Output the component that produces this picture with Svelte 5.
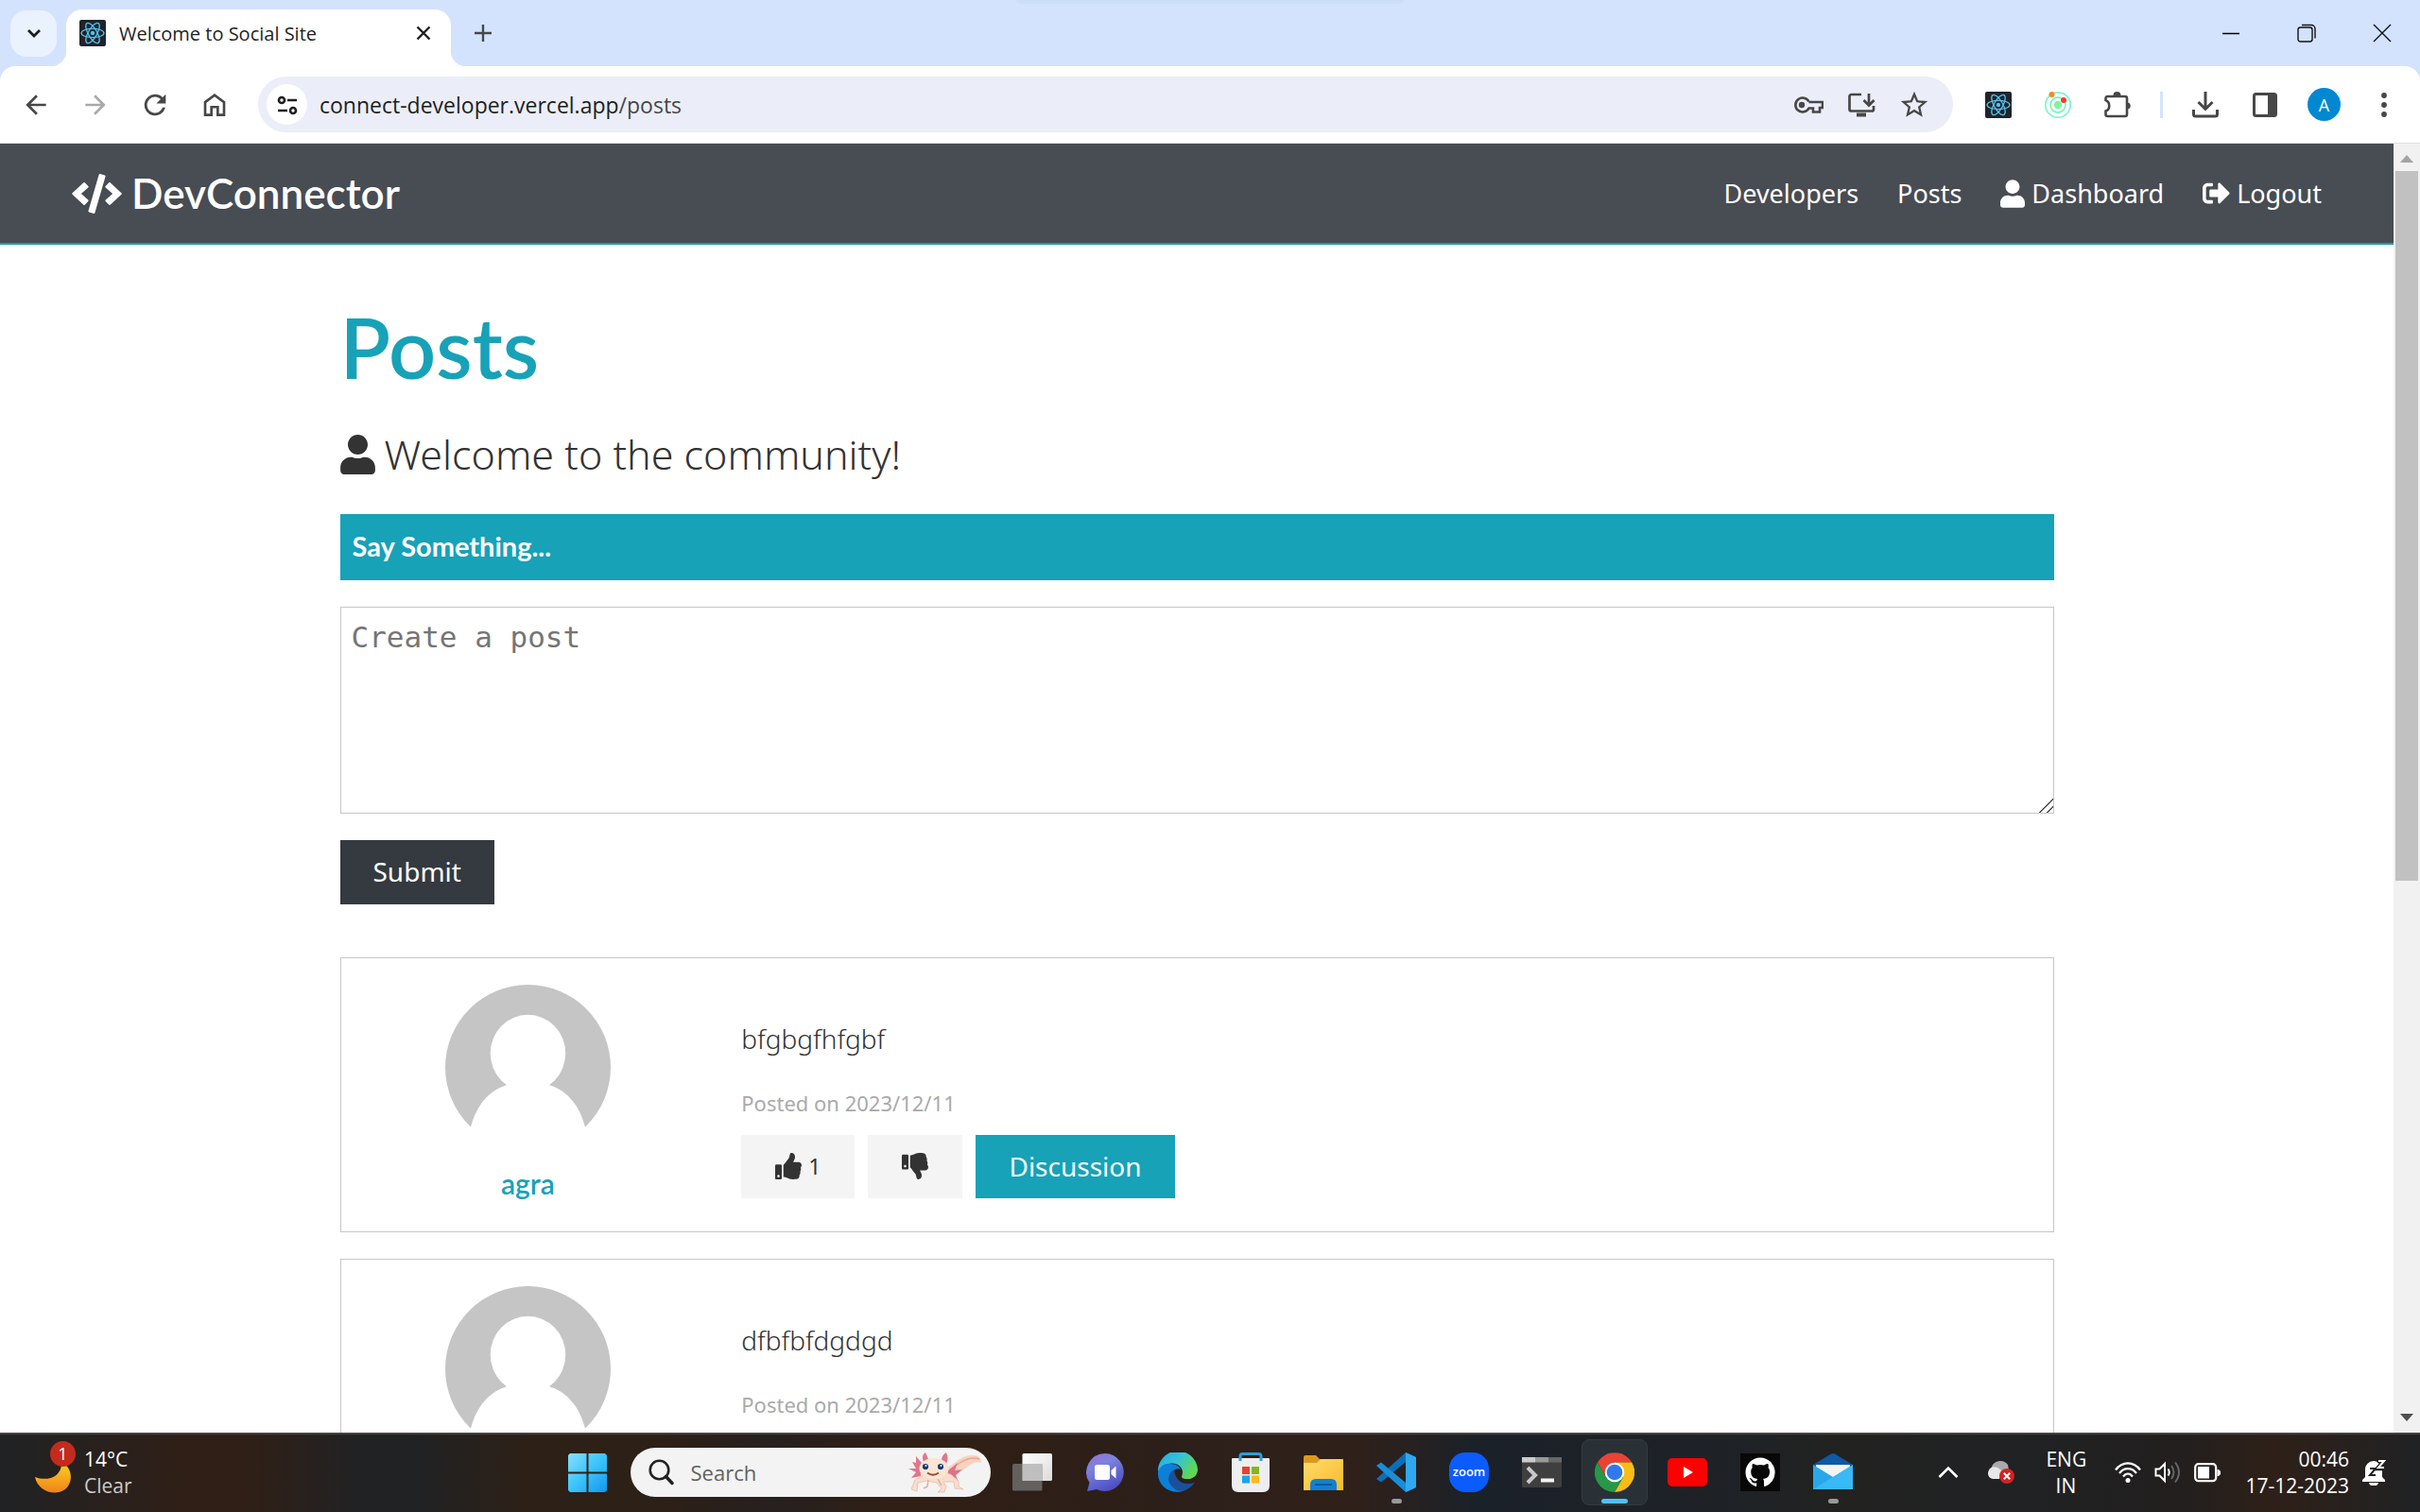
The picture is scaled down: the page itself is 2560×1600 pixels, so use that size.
<script>
  let draft = $state('');
  const posts = [
    { name: 'agra', text: 'bfgbgfhfgbf', date: '2023/12/11', likes: 1 },
    { name: 'agra', text: 'dfbfbfdgdgd', date: '2023/12/11', likes: 0 }
  ];
</script>

{#snippet atom()}
  <svg class="favicon" viewBox="0 0 28 28" aria-hidden="true">
    <rect width="28" height="28" rx="2" fill="#20232a" />
    <g fill="none" stroke="#53c1ea" stroke-width="1.3">
      <ellipse cx="14" cy="14" rx="12" ry="4.6" />
      <ellipse cx="14" cy="14" rx="12" ry="4.6" transform="rotate(60 14 14)" />
      <ellipse cx="14" cy="14" rx="12" ry="4.6" transform="rotate(120 14 14)" />
    </g>
    <circle cx="14" cy="14" r="2.2" fill="#53c1ea" />
  </svg>
{/snippet}

{#snippet user()}
  <svg class="fa user" viewBox="0 0 448 512" aria-hidden="true"><path d="M224 256c70.700 0 128-57.300 128-128S294.700 0 224 0 96 57.300 96 128s57.300 128 128 128zm89.600 32h-16.700c-22.200 10.200-46.900 16-72.900 16s-50.600-5.800-72.900-16h-16.700C60.200 288 0 348.200 0 422.400V464c0 26.500 21.500 48 48 48h352c26.500 0 48-21.500 48-48v-41.600c0-74.200-60.200-134.400-134.400-134.400z" /></svg>
{/snippet}

<div class="screen">
  <header class="browser">
    <div class="tabs">
      <div class="pull"></div>
      <button class="tab-search" aria-label="Search tabs">
        <svg width="16" height="16" viewBox="0 0 16 16" fill="none" stroke="#1f1f1f" stroke-width="2.800"><path d="M2 5l6 6 6-6" /></svg>
      </button>
      <div class="tab">
        {@render atom()}
        <span class="title">Welcome to Social Site</span>
        <button class="close" aria-label="Close tab">
          <svg width="24" height="24" viewBox="0 0 24 24" fill="none" stroke="#1f1f1f" stroke-width="2.400"><path d="M5.500 5.500l13 13M18.500 5.500l-13 13" /></svg>
        </button>
      </div>
      <button class="new-tab" aria-label="New tab">
        <svg width="24" height="24" viewBox="0 0 24 24" fill="none" stroke="#474747" stroke-width="2.400"><path d="M12 3v18M3 12h18" /></svg>
      </button>
      <div class="window-controls">
        <button aria-label="Minimize"><svg width="20" height="20" viewBox="0 0 20 20"><path d="M1 10.500h18" stroke="#000" stroke-width="1.500" /></svg></button>
        <button aria-label="Restore"><svg width="20" height="20" viewBox="0 0 20 20" fill="none" stroke="#111" stroke-width="1.400"><rect x="1" y="4" width="15" height="15" rx="2.500" /><path d="M5 1.500h10a4 4 0 0 1 4 4v10" /></svg></button>
        <button aria-label="Close window"><svg width="20" height="20" viewBox="0 0 20 20" stroke="#111" stroke-width="1.400"><path d="M1 1l18 18M19 1L1 19" /></svg></button>
      </div>
    </div>

    <div class="toolbar">
      <button aria-label="Back"><svg width="32" height="32" viewBox="0 0 24 24" fill="#474747"><path d="M20 11H7.830l5.590-5.590L12 4l-8 8 8 8 1.410-1.410L7.830 13H20v-2z" /></svg></button>
      <button aria-label="Forward"><svg width="32" height="32" viewBox="0 0 24 24" fill="#a9a9a9"><path d="M12 4l-1.410 1.410L16.170 11H4v2h12.170l-5.580 5.590L12 20l8-8z" /></svg></button>
      <button aria-label="Reload"><svg width="34" height="34" viewBox="0 0 24 24" fill="#474747"><path d="M17.650 6.350A7.960 7.960 0 0 0 12 4a8 8 0 1 0 7.730 10h-2.080A6 6 0 1 1 12 6c1.660 0 3.140.69 4.220 1.780L13 11h7V4l-2.350 2.350z" /></svg></button>
      <button aria-label="Home"><svg width="32" height="32" viewBox="0 0 24 24" fill="none" stroke="#474747" stroke-width="2"><path d="M4.500 9.800L12 4.200l7.500 5.600V20H14.500v-6.300h-5V20h-5z" /></svg></button>
      <div class="omnibox">
        <button class="site" aria-label="View site information">
          <svg width="26" height="26" viewBox="0 0 26 26" fill="none" stroke="#1f1f1f" stroke-width="2.600"><circle cx="7" cy="8" r="3" /><path d="M13 8h10M3 19h10" /><circle cx="19" cy="19" r="3" /></svg>
        </button>
        <a class="url" href="/posts">connect-developer.vercel.app<span>/posts</span></a>
        <div class="omni-actions">
          <button aria-label="Manage passwords"><svg width="32" height="20" viewBox="0 0 32 20" fill="none" stroke="#474747" stroke-width="2.600"><path d="M16.500 6.500A7.500 7.500 0 1 0 16.500 13.500H21V17.500H28V13H31V7H16.500" /><circle cx="9" cy="10" r="3.200" fill="#474747" stroke="none" /></svg></button>
          <button aria-label="Install app"><svg width="30" height="28" viewBox="0 0 30 28" fill="none" stroke="#474747" stroke-width="2.700"><path d="M15 3H4.500A2 2 0 0 0 2.500 5V18.500A2 2 0 0 0 4.500 20.500H26A2 2 0 0 0 28 18.500V15M23 2V13M17.500 9l5.500 5.500L28.500 9" /><path d="M10 24.500h10" stroke-width="4" /></svg></button>
          <button aria-label="Bookmark"><svg width="34" height="34" viewBox="0 0 24 24" fill="#474747"><path d="M22 9.240l-7.190-.62L12 2 9.190 8.630 2 9.240l5.460 4.730L5.820 21 12 17.270 18.180 21l-1.630-7.030L22 9.240zM12 15.400l-3.760 2.270 1-4.280-3.320-2.880 4.380-.38L12 6.100l1.710 4.040 4.380.38-3.320 2.880 1 4.280L12 15.400z" /></svg></button>
        </div>
      </div>
      <button aria-label="React Developer Tools">{@render atom()}</button>
      <button aria-label="Orbit">
        <svg width="30" height="30" viewBox="0 0 30 30" fill="none" stroke-width="1.800"><circle cx="15" cy="15" r="13.200" stroke="#83f5cf" /><circle cx="15" cy="15" r="8" stroke="#80f5b9" /><circle cx="15" cy="15" r="4.200" fill="#7df5a0" /><circle cx="8.500" cy="4" r="3" fill="#f58a1f" /><circle cx="21" cy="10" r="3" fill="#f23b2f" /></svg>
      </button>
      <button aria-label="Extensions">
        <svg width="32" height="32" viewBox="0 0 32 32" fill="none"><path d="M3.500 11V9a2 2 0 0 1 2-2H24a2 2 0 0 1 2 2V26a2 2 0 0 1-2 2H5.500a2 2 0 0 1-2-2V22.500C8.500 21 8.500 13 3.500 11z" stroke="#474747" stroke-width="2.600" /><path d="M11.500 6a4 4 0 0 1 8 0zM27 13.500a3.600 3.600 0 0 1 0 7z" fill="#474747" /></svg>
      </button>
      <span class="divider"></span>
      <button aria-label="Downloads"><svg width="30" height="30" viewBox="0 0 30 30" fill="none" stroke="#474747" stroke-width="3"><path d="M15 1V19M7.500 12L15 19.500 22.500 12M2.500 20v5a2 2 0 0 0 2 2h21a2 2 0 0 0 2-2v-5" /></svg></button>
      <button aria-label="Side panel"><svg width="28" height="28" viewBox="0 0 28 28"><rect x="2.500" y="2.500" width="23" height="23" rx="2" fill="none" stroke="#474747" stroke-width="3" /><path d="M17 2h8v24h-8z" fill="#474747" /></svg></button>
      <button class="avatar-btn" aria-label="Profile">A</button>
      <button aria-label="Menu"><svg width="8" height="28" viewBox="0 0 8 28" fill="#474747"><circle cx="4" cy="4" r="2.900" /><circle cx="4" cy="14" r="2.900" /><circle cx="4" cy="24" r="2.900" /></svg></button>
    </div>
  </header>

  <div class="viewport">
    <div class="page">
      <nav class="navbar">
        <a class="brand" href="/">
          <svg class="fa" width="53" height="42" viewBox="0 0 640 512" aria-hidden="true"><path d="M278.900 511.500l-61-17.700c-6.400-1.800-10-8.500-8.200-14.900L346.200 8.700c1.800-6.400 8.500-10 14.900-8.200l61 17.700c6.400 1.800 10 8.500 8.200 14.900L293.800 503.300c-1.900 6.400-8.500 10.100-14.900 8.200zm-114-112.200l43.500-46.400c4.600-4.900 4.300-12.700-.8-17.200L117 256l90.600-79.700c5.100-4.500 5.500-12.300.8-17.200l-43.500-46.400c-4.500-4.800-12.100-5.100-17-.5L3.800 247.200c-5.100 4.700-5.100 12.800 0 17.500l144.100 135.100c4.900 4.600 12.500 4.400 17-.5zm327.200.6l144.100-135.100c5.100-4.700 5.100-12.800 0-17.500L492.100 112.100c-4.800-4.500-12.400-4.300-17 .5L431.600 159c-4.600 4.900-4.300 12.700.8 17.200L523 256l-90.600 79.700c-5.100 4.500-5.500 12.300-.8 17.200l43.500 46.400c4.500 4.900 12.100 5.100 17 .6z" /></svg>
          DevConnector
        </a>
        <ul>
          <li><a href="/profiles">Developers</a></li>
          <li><a href="/posts">Posts</a></li>
          <li><a href="/dashboard">{@render user()}Dashboard</a></li>
          <li><a href="/logout"><svg class="fa" width="29" height="29" viewBox="0 0 512 512" aria-hidden="true"><path d="M497 273L329 441c-15 15-41 4.500-41-17v-96H152c-13.300 0-24-10.700-24-24v-96c0-13.300 10.700-24 24-24h136V88c0-21.400 25.900-32 41-17l168 168c9.300 9.400 9.300 24.600 0 34zM192 436v-40c0-6.600-5.400-12-12-12H96c-17.700 0-32-14.300-32-32V160c0-17.700 14.300-32 32-32h84c6.600 0 12-5.400 12-12V76c0-6.600-5.400-12-12-12H96c-53 0-96 43-96 96v192c0 53 43 96 96 96h84c6.600 0 12-5.400 12-12z" /></svg>Logout</a></li>
        </ul>
      </nav>

      <main>
        <h1>Posts</h1>
        <p class="lead">{@render user()}Welcome to the community!</p>
        <form onsubmit={(e) => e.preventDefault()}>
          <h3><label for="post-text">Say Something...</label></h3>
          <textarea id="post-text" placeholder="Create a post" bind:value={draft}></textarea>
          <button class="btn dark" type="submit">Submit</button>
        </form>
        <div class="posts">
          {#each posts as post}
            <article>
              <a class="author" href="/profile">
                <svg viewBox="0 0 176 176" role="img" aria-label="Avatar">
                  <defs><mask id="person"><rect width="176" height="176" fill="#fff" /><ellipse cx="88" cy="73" rx="40" ry="41" fill="#000" /><path d="M68 106Q88 98 108 106C132 112 144 132 149 152L152 180H24L27 152C32 132 44 112 68 106z" fill="#000" /></mask></defs>
                  <circle cx="88" cy="88" r="88" fill="#c5c5c5" mask="url(#person)" />
                </svg>
                <h4>{post.name}</h4>
              </a>
              <div class="body">
                <p class="text">{post.text}</p>
                <p class="date">Posted on {post.date}</p>
                <div class="actions">
                  <button class="btn light" aria-label="Like">
                    <svg class="fa" width="28" height="28" viewBox="0 0 512 512"><path d="M104 224H24c-13.255 0-24 10.745-24 24v240c0 13.255 10.745 24 24 24h80c13.255 0 24-10.745 24-24V248c0-13.255-10.745-24-24-24zM64 472c-13.255 0-24-10.745-24-24s10.745-24 24-24 24 10.745 24 24-10.745 24-24 24zM384 81.452c0 42.416-25.970 66.208-33.277 94.548h101.723c33.397 0 59.397 27.746 59.553 58.098.084 17.938-7.546 37.249-19.439 49.197l-.11.11c9.836 23.337 8.237 56.037-9.308 79.469 8.681 25.895-.069 57.704-16.382 74.757 4.298 17.598 2.244 32.575-6.148 44.632C440.202 511.587 389.616 512 346.839 512l-2.845-.001c-48.287-.017-87.806-17.598-119.560-31.725-15.957-7.099-36.821-15.887-52.651-16.178-6.540-.12-11.783-5.457-11.783-11.998v-213.770c0-3.200 1.282-6.271 3.558-8.521 39.614-39.144 56.648-80.587 89.117-113.111 14.804-14.832 20.188-37.236 25.393-58.902C282.515 39.293 291.817 0 312 0c24 0 72 8 72 81.452z" /></svg>
                    {#if post.likes}<span>{post.likes}</span>{/if}
                  </button>
                  <button class="btn light" aria-label="Unlike">
                    <svg class="fa" width="28" height="28" viewBox="0 0 512 512"><path d="M0 56v240c0 13.255 10.745 24 24 24h80c13.255 0 24-10.745 24-24V56c0-13.255-10.745-24-24-24H24C10.745 32 0 42.745 0 56zm40 200c0-13.255 10.745-24 24-24s24 10.745 24 24-10.745 24-24 24-24-10.745-24-24zM312 512c-20.183 0-29.485-39.293-33.931-57.795-5.206-21.666-10.589-44.070-25.393-58.902-32.469-32.524-49.503-73.967-89.117-113.111a11.980 11.980 0 0 1-3.558-8.521V59.901c0-6.541 5.243-11.878 11.783-11.998 15.831-.29 36.694-9.079 52.651-16.178C256.189 17.598 295.709.017 343.995 0h2.844c42.777 0 93.363.413 113.774 29.737 8.392 12.057 10.446 27.034 6.148 44.632 16.312 17.053 25.063 48.863 16.382 74.757 17.544 23.432 19.143 56.132 9.308 79.469l.11.11c11.893 11.949 19.523 31.259 19.439 49.197-.156 30.352-26.157 58.098-59.553 58.098H350.723C358.030 364.340 384 388.132 384 430.548 384 504 336 512 312 512z" /></svg>
                  </button>
                  <a class="btn primary" href="/post">Discussion</a>
                </div>
              </div>
            </article>
          {/each}
        </div>
      </main>
    </div>
    <div class="scrollbar" aria-hidden="true">
      <svg width="14" height="8" viewBox="0 0 14 8"><path d="M0 8L7 0l7 8z" fill="#a3a3a3" /></svg>
      <div class="track"><div class="thumb"></div></div>
      <svg width="14" height="8" viewBox="0 0 14 8"><path d="M0 0l7 8 7-8z" fill="#505050" /></svg>
    </div>
  </div>

  <footer class="taskbar">
    <button class="weather">
      <span class="moon">
        <svg width="40" height="36" viewBox="0 0 40 36"><defs><linearGradient id="moon" x1="0" y1="0" x2="0" y2="1"><stop offset="0" stop-color="#f8d51c" /><stop offset="1" stop-color="#f2811d" /></linearGradient></defs><path d="M29 2C42 9 41 24 33 31C22 39 4 33 1 18C14 23 30 18 29 2z" fill="url(#moon)" /></svg>
        <b>1</b>
      </span>
      <span class="temps"><span>14°C</span><span class="dim">Clear</span></span>
    </button>

    <div class="apps">
      <button class="start" aria-label="Start"><svg width="41" height="41" viewBox="0 0 41 41"><defs><linearGradient id="win" x1="0" y1="0" x2="1" y2="1"><stop offset="0" stop-color="#86dfff" /><stop offset=".5" stop-color="#3cc4fa" /><stop offset="1" stop-color="#0f97f0" /></linearGradient></defs><path d="M2 0H19.500V19.500H0V2zM21.500 0H39l2 2V19.500H21.500zM0 21.500H19.500V41H2l-2-2zM21.500 21.500H41V39l-2 2H21.500z" fill="url(#win)" /></svg></button>
      <label class="search">
        <svg width="28" height="28" viewBox="0 0 28 28" fill="none" stroke="#222" stroke-width="2.600" stroke-linecap="round"><circle cx="12.500" cy="11.500" r="9.800" /><path d="M19.500 18.500l6.500 7" stroke-width="3.400" /></svg>
        <input type="text" placeholder="Search" aria-label="Search" />
        <svg width="78" height="44" viewBox="0 0 78 44" aria-hidden="true">
          <path d="M40 18C50 12 55 4 68 4C75 4 78 8 77 12C72 10 68 12 63 16C56 21 49 25 41 26z" fill="#f6d3c0" /><path d="M50 15C58 9 66 5 75 8" fill="none" stroke="#f0a78c" stroke-width="1.500" />
          <path d="M42 20L52 12 49 20 57 19 50 25 53 32 44 28 41 33z" fill="#dd7388" />
          <path d="M14 12L8 5 8 12 4 11 8 18 0 18 8 22 3 28 13 26zM16 11C14 6 15 3 18 1L22 10zM35 11C35 5 37 3 40 1C42 5 42 9 40 13z" fill="#e0778c" />
          <path d="M16 25C24 22 44 20 48 27C52 29 54 33 53 37L58 40 49 39 48 32 37 32 40 37 38 43H31L35 39 30 33 19 31 10 33 9 42 3 40 7 30z" fill="#f8ddcd" stroke="#e9b79f" stroke-width=".7" />
          <path d="M21 30l-1 7-4 2M31 29l4 7" fill="none" stroke="#e5ad96" stroke-width="1.500" />
          <ellipse cx="27" cy="18" rx="15.500" ry="11" fill="#fae4d4" />
          <circle cx="18" cy="16" r="3.100" fill="#173b6b" /><circle cx="34" cy="16" r="3.100" fill="#173b6b" /><circle cx="18.500" cy="15" r="1" fill="#fff" /><circle cx="34.500" cy="15" r="1" fill="#fff" />
          <path d="M20 22.500Q26 27 32 22.500" fill="none" stroke="#9c4b2a" stroke-width="1.800" />
        </svg>
      </label>
      <div class="icons">
        <button aria-label="Task view"><svg viewBox="0 0 42 42"><defs><linearGradient id="tv" x1="0" y1="0" x2="1" y2="1"><stop stop-color="#fff" /><stop offset="1" stop-color="#dcdcdc" /></linearGradient></defs><rect x="10.500" y="1" width="31.500" height="29" rx="1.500" fill="url(#tv)" /><rect y="12" width="31.500" height="28.500" rx="1.500" fill="#6d6c6b" fill-opacity=".85" /><path d="M10.500 12h21v18h-21z" fill="#bfbfbf" /></svg></button>
        <button aria-label="Chat"><svg viewBox="0 0 42 42"><defs><linearGradient id="chat" x1="0" y1="0" x2=".5" y2="1"><stop stop-color="#9a6fd0" /><stop offset=".4" stop-color="#7b83e0" /><stop offset="1" stop-color="#4f50c4" /></linearGradient></defs><path d="M21 1a20 20 0 1 1-9 38L2 41l2.500-9A20 20 0 0 1 21 1z" fill="url(#chat)" /><rect x="10" y="13" width="16" height="16" rx="2.500" fill="#fff" /><path d="M27.500 19l5-4.500v13l-5-4.500z" fill="#fff" /></svg></button>
        <button aria-label="Edge"><svg viewBox="0 0 42 42"><defs><linearGradient id="edge1" x1="0" y1="0" x2="1" y2=".5"><stop stop-color="#2aa8e0" /><stop offset=".5" stop-color="#33c1dd" /><stop offset="1" stop-color="#5fd94f" /></linearGradient></defs><path d="M0 21A21 21 0 0 1 42 18C42 25 36 28.500 31 28C27 28 24 27 25.500 24C28 16 20 10 12 12C6 13 1 17 0 21z" fill="url(#edge1)" /><path d="M0 21C2 14 8 11 14 12C19 12 23 15 24 18C17 15 13 22 15 29C17 35 22 40 28 40.500C12 46 -1 34 0 21z" fill="#0c7fd9" /><path d="M17 18C11 22 9 29 14 35C18 41 25 42 30 39.500C34 37.500 37 34.500 39 31.500C29 36 18 31 17 18z" fill="#1a5199" /></svg></button>
        <button aria-label="Microsoft Store"><svg viewBox="0 0 42 42"><path d="M1 7Q1 6 2 6H40Q41 6 41 7V35Q41 42 34 42H8Q1 42 1 35z" fill="#eee" /><path d="M10 9V4Q10 1.500 12.500 1.500H29.500Q32 1.500 32 4V9" fill="none" stroke="#2a9fe0" stroke-width="3" /><path d="M12 15h8v8h-8z" fill="#e6432b" /><path d="M22 15h8v8h-8z" fill="#82b721" /><path d="M12 24.500h8v8h-8z" fill="#1ba4ea" /><path d="M22 24.500h8v8h-8z" fill="#fbb91b" /></svg></button>
        <button aria-label="File Explorer"><svg viewBox="0 0 42 42"><defs><linearGradient id="fold" x1="0" y1="0" x2="1" y2="1"><stop stop-color="#ffdc6e" /><stop offset="1" stop-color="#f9b928" /></linearGradient></defs><path d="M0 5Q0 3 2 3H13L17 7H42V16H0z" fill="#dc9a1d" /><path d="M0 11H14L18 7H41Q42 7 42 9V40H0z" fill="url(#fold)" /><path d="M7 40V34Q7 28 13 28H29Q35 28 35 34V40z" fill="#1480cf" /><path d="M12 34h18" stroke="#0b5b9b" stroke-width="2" /></svg></button>
        <button class="running" aria-label="Visual Studio Code"><svg viewBox="0 0 42 42"><path d="M31 0L41 4.500Q42 5 42 6V36Q42 37 41 37.500L31 42V10L5 31.500 0 28z" fill="#0a6fb8" /><path d="M0 14L5 10.500 31 32V42L0 14z" fill="#1b8cd8" /><path d="M31 0L41 4.500Q42 5 42 6V36Q42 37 41 37.500L31 42z" fill="#2fa8f0" /></svg></button>
        <button aria-label="Zoom"><svg viewBox="0 0 42 42"><rect width="42" height="42" rx="17" fill="#0b5cff" /><text x="21" y="25" text-anchor="middle" font-family="Open Sans, sans-serif" font-size="13" font-weight="600" fill="#fff">zoom</text></svg></button>
        <button aria-label="Terminal"><svg viewBox="0 0 42 42"><rect y="5" width="42" height="32" rx="1.500" fill="#3f3f3f" /><path d="M0 5h14v5.500H0z" fill="#ccc" /><path d="M14 5h14v5.500H14z" fill="#999" /><path d="M28 5h14v5.500H28z" fill="#666" /><path d="M6 16l8 8-8 8" fill="none" stroke="#c9c9c9" stroke-width="4" /><path d="M20 29.500h14" stroke="#f4f4f4" stroke-width="4" /></svg></button>
        <button class="running active" aria-label="Chrome"><svg viewBox="0 0 42 42"><path d="M3 10.500A21 21 0 0 1 39.200 10.500H21L12 26z" fill="#ea4335" /><path d="M39.200 10.500A21 21 0 0 1 21 42L30 26.200 21 10.500z" fill="#fbbc15" /><path d="M21 42A21 21 0 0 1 2.800 10.500L12 26.200H30z" fill="#279847" /><circle cx="21" cy="21" r="10.300" fill="#fff" /><circle cx="21" cy="21" r="8.300" fill="#2f78ee" /></svg></button>
        <button aria-label="YouTube"><svg viewBox="0 0 42 42"><rect y="6" width="42" height="30" rx="5" fill="#f00" /><path d="M17 15l10 6-10 6z" fill="#fff" /></svg></button>
        <button aria-label="GitHub"><svg viewBox="0 0 42 42"><path d="M0 1h42v40H0z" fill="#080808" /><g transform="translate(5.500 5.500) scale(1.950)"><path d="M8 0C3.580 0 0 3.580 0 8c0 3.540 2.290 6.530 5.470 7.590.4.070.55-.17.55-.38 0-.19-.01-.82-.01-1.490-2.010.37-2.530-.49-2.690-.94-.09-.23-.48-.94-.82-1.130-.28-.15-.68-.52-.01-.53.63-.01 1.080.58 1.230.82.72 1.210 1.870.87 2.330.66.070-.52.28-.87.51-1.070-1.780-.2-3.640-.89-3.640-3.950 0-.87.31-1.590.82-2.150-.08-.2-.36-1.020.08-2.120 0 0 .67-.21 2.200.82.64-.18 1.320-.27 2-.27.68 0 1.360.09 2 .27 1.530-1.040 2.200-.82 2.200-.82.44 1.100.16 1.920.08 2.120.51.56.82 1.270.82 2.150 0 3.070-1.870 3.750-3.650 3.950.29.25.54.73.54 1.480 0 1.070-.01 1.930-.01 2.200 0 .21.15.46.55.38A8.013 8.013 0 0 0 16 8c0-4.420-3.580-8-8-8z" fill="#fff" /></g></svg></button>
        <button class="running" aria-label="Mail"><svg viewBox="0 0 42 42"><path d="M0 13L19 1.500Q21 .5 23 1.500L42 13V22H0z" fill="#0c59a4" /><path d="M3 13H39V30H3z" fill="#f3f3f3" /><path d="M0 13L21 26 42 13V39H0z" fill="#28a8ea" /><path d="M42 13V39H0z" fill="#45c4fb" opacity=".6" /></svg></button>
      </div>
    </div>

    <div class="tray">
      <button aria-label="Show hidden icons"><svg width="22" height="14" viewBox="0 0 22 14" fill="none" stroke="#fff" stroke-width="2.600"><path d="M1.500 12L11 2.500 20.500 12" /></svg></button>
      <button class="cloud" aria-label="OneDrive"><svg width="28" height="26" viewBox="0 0 28 26"><path d="M7 17A7 7 0 0 1 4 7C7 0 17-1 21 5L23 16z" fill="#aaa" /><path d="M0 14A7 7 0 0 1 10 8L16 12 12 20H5A6 6 0 0 1 0 14z" fill="#e7e7e7" /><circle cx="20" cy="17" r="8" fill="#d32222" /><path d="M16.800 13.800l6.400 6.400M23.200 13.800l-6.400 6.400" stroke="#fff" stroke-width="2" /></svg></button>
      <button class="lang">ENG<br />IN</button>
      <button class="status" aria-label="Network, volume, battery">
        <svg width="28" height="24" viewBox="0 0 28 24" fill="none" stroke="#fff" stroke-width="2.200"><path d="M1 9.500C8 0 20 0 27 9.500M5 13C10 6.500 18 6.500 23 13M9 16.500C12 12.500 16 12.500 19 16.500" /><circle cx="14" cy="20.500" r="2.500" fill="#fff" stroke="none" /></svg>
        <svg width="28" height="24" viewBox="0 0 28 24" fill="none" stroke="#fff" stroke-width="2"><path d="M1.500 8.500H5.500L11 3V21L5.500 15.500H1.500zM14.500 8.500Q17 12 14.500 15.500" /><path d="M18 5Q23 12 18 19M22 1.500Q30 12 22 22.500" stroke="#666" /></svg>
        <svg width="28" height="24" viewBox="0 0 28 24"><rect x="1.200" y="3.200" width="22" height="18" rx="3.500" fill="none" stroke="#fff" stroke-width="2.200" /><path d="M4 6h12v12.500H4zM24.500 9h1.500l2 2v3l-2 2h-1.500z" fill="#fff" /></svg>
      </button>
      <button class="clock">00:46<br />17-12-2023</button>
      <button class="bell" aria-label="Notifications"><svg width="25" height="28" viewBox="0 0 25 28"><path d="M3 19V12A9 9 0 0 1 12 2C16 2 21 6 21 12V19L24 22V24H0V22zM7 25h10a5 3.500 0 0 1-10 0z" fill="#fff" /><path d="M8 10h6l-6 7h6" fill="none" stroke="#222" stroke-width="2" /><path d="M16 2h7l-7 8h7" fill="none" stroke="#222" stroke-width="4.500" /><path d="M17 2h6l-6 7h6" fill="none" stroke="#fff" stroke-width="2" /></svg></button>
    </div>
  </footer>
</div>

<style>
  :global(body) { margin: 0; }
  * { box-sizing: border-box; }
  button { border: 0; padding: 0; margin: 0; background: none; color: inherit; font: inherit; display: flex; align-items: center; justify-content: center; cursor: pointer; }
  a { color: inherit; text-decoration: none; }
  svg { display: block; flex: none; }
  .screen { height: 100vh; display: flex; flex-direction: column; overflow: hidden; background: #fff; font-family: 'Noto Sans', sans-serif; color: #333; }
  .browser { font-family: 'Open Sans', sans-serif; color: #1f1f1f; background: #d3e3fd; flex: none; }

  .tabs { height: 70px; display: flex; align-items: center; position: relative; padding-left: 11px; }
  .pull { position: absolute; top: 0; left: 42%; width: 16%; height: 4px; background: #cddef9; border-radius: 0 0 8px 8px; }
  .tab-search { width: 49px; height: 49px; border-radius: 17px; background: #eaf2fd; }
  .tab { align-self: flex-end; height: 60px; width: 407px; margin-left: 10px; padding: 0 17px 10px 14px; background: #fff; border-radius: 17px 17px 0 0; display: flex; align-items: center; gap: 14px; position: relative; }
  .tab::before, .tab::after { content: ''; position: absolute; bottom: 0; width: 17px; height: 17px; }
  .tab::before { right: 100%; background: radial-gradient(circle at 0 0, transparent 17px, #fff 18px); }
  .tab::after { left: 100%; background: radial-gradient(circle at 100% 0, transparent 17px, #fff 18px); }
  .title { flex: 1; font-size: 20px; }
  .favicon { width: 28px; height: 28px; }
  .new-tab { margin-left: 22px; }
  .window-controls { margin-left: auto; display: flex; }
  .window-controls button { width: 80px; height: 70px; }

  .toolbar { height: 82px; background: #fff; border-radius: 16px 16px 0 0; border-bottom: 1px solid #dcdfe4; display: flex; align-items: center; gap: 23px; padding: 0 18px; }
  .toolbar button { width: 40px; height: 40px; flex: none; }
  .omnibox { flex: 1; min-width: 0; height: 59px; margin: 0 5px 0 3px; border-radius: 30px; background: #ebeef8; display: flex; align-items: center; gap: 13px; padding: 0 21px 0 9px; }
  .omnibox .site { width: 43px; height: 43px; border-radius: 50%; background: #fff; }
  .url { flex: 1; font-size: 23px; }
  .url span { color: #474747; }
  .omni-actions { display: flex; gap: 16px; }
  .divider { width: 3px; height: 28px; margin: 0 2px; background: #d3e3fd; }
  .toolbar .avatar-btn { width: 35px; height: 35px; margin: 0 3px 0 2px; border-radius: 50%; background: #0288d1; color: #fff; font-size: 18px; }

  .viewport { flex: 1; min-height: 0; display: flex; }
  .page { flex: 1; min-width: 0; overflow-y: auto; scrollbar-width: none; }
  .scrollbar { width: 28px; background: #f1f1f1; display: flex; flex-direction: column; align-items: center; gap: 9px; padding: 12px 2px; }
  .track { flex: 1; align-self: stretch; }
  .thumb { height: 57.5%; background: #c1c1c1; }

  .fa { fill: currentColor; }
  .navbar { display: flex; justify-content: space-between; align-items: center; padding: 19px 76px; background: #484c53; color: #fff; border-bottom: 2px solid #17a2b8; }
  .brand { display: flex; align-items: center; gap: 10px; font-family: Lato, sans-serif; font-size: 44px; font-weight: 600; line-height: 67px; }
  .navbar ul { list-style: none; margin: 0; padding: 0; display: flex; gap: 41px; font-size: 27px; line-height: 45px; }
  .navbar li a { display: flex; align-items: center; gap: 7px; }
  .navbar .user { width: 26px; height: 30px; }

  main { max-width: 1925px; margin: 0 auto; padding: 58px 56px 0; }
  h1 { margin: 0 0 29px; font-family: Lato, sans-serif; font-size: 88px; font-weight: 600; line-height: 101px; color: #17a2b8; }
  .lead { margin: 0 0 30px; display: flex; align-items: center; gap: 10px; font-size: 43px; font-weight: 300; line-height: 67px; }
  .lead .user { width: 37px; height: 42px; }
  form { display: flex; flex-direction: column; align-items: flex-start; gap: 28px; }
  h3 { margin: 0; align-self: stretch; padding: 11px 13px 13px; background: #17a2b8; color: #fff; font-family: Lato, sans-serif; font-size: 29px; font-weight: 700; line-height: 46px; }
  textarea { align-self: stretch; height: 219px; padding: 11px; border: 1px solid #c6c6c6; font: 31px/40px 'DejaVu Sans Mono', monospace; color: #333; resize: vertical; outline: 0; }
  textarea::placeholder { color: #757575; }
  textarea::-webkit-resizer { background: linear-gradient(135deg, transparent 48%, #555 48%, #555 55%, transparent 55%, transparent 74%, #555 74%, #555 81%, transparent 81%); }
  .btn { height: 67px; padding: 0 35px 2px; gap: 7px; font-size: 28px; line-height: 36px; display: flex; align-items: center; }
  .dark { height: 68px; background: #343a40; color: #fff; }
  .light { padding: 0 36px 2px; background: #f4f4f4; color: #333; }
  .light span { font-size: 23px; }
  .primary { background: #17a2b8; color: #fff; }

  .posts { margin-top: 56px; display: grid; gap: 28px; }
  article { display: grid; grid-template-columns: 1fr 4fr; gap: 56px; align-items: center; padding: 28px; border: 1px solid #c6c6c6; }
  .author { display: flex; flex-direction: column; align-items: center; gap: 12px; color: #17a2b8; }
  .author svg { width: 175px; height: 175px; }
  h4 { margin: 0; font-family: Lato, sans-serif; font-size: 30px; font-weight: 600; line-height: 46px; }
  .body p { margin: 0; font-weight: 300; }
  .body { padding-top: 28px; }
  .body .text { font-size: 28px; line-height: 45px; margin-bottom: 27px; }
  .body .date { font-size: 22px; line-height: 36px; color: #aaa; margin-bottom: 16px; font-weight: 400; }
  .actions { display: flex; gap: 14px; }

  .taskbar { flex: none; height: 84px; border-top: 2px solid #45423f; display: grid; grid-template-columns: 1fr auto 1fr; align-items: center; padding: 0 36px 2px; color: #fff; font: 21px/28px 'Open Sans', sans-serif; background: linear-gradient(90deg, #202224 0, #301f16 8%, #301f16 10%, #202224 15%, #202224 17%, #2d2016 22%, #2d2016 27%, #26201f 32%, #301f14 37%, #2c1f19 48%, #30201a 56%, #1b2129 61%, #1e2227 71%, #222220 76%, #202224 83%, #221f1e 90%, #2e2018 94%, #202224 100%); }
  .weather { justify-self: start; gap: 13px; }
  .moon { position: relative; padding-top: 10px; }
  .moon b { position: absolute; top: -10px; right: -4px; width: 27px; height: 27px; border-radius: 50%; background: #c42b1c; font-size: 18px; font-weight: 400; line-height: 26px; }
  .temps { display: flex; flex-direction: column; align-items: flex-start; }
  .dim { color: #ccc; }
  .apps { display: flex; align-items: center; }
  .search { width: 381px; height: 52px; margin: 0 23px 0 25px; padding: 0 9px 0 18px; border-radius: 26px; background: #f3f3f3; display: flex; align-items: center; gap: 18px; }
  .search input { flex: 1; min-width: 0; padding: 0; border: 0; outline: 0; background: none; font: 22px/30px 'Open Sans', sans-serif; }
  .search input::placeholder { color: #616161; }
  .icons { display: flex; gap: 35px; }
  .icons button { width: 42px; height: 70px; position: relative; }
  .icons button svg { width: 42px; height: 42px; position: relative; }
  .running::after { content: ''; position: absolute; bottom: 2px; left: 50%; width: 11px; height: 5px; margin-left: -5px; border-radius: 3px; background: #999; }
  .active::before { content: ''; position: absolute; inset: 0 -14px; border-radius: 8px; background: #293137; border: 1px solid #343b40; }
  .active::after { width: 28px; margin-left: -14px; background: #4cc2ff; }
  .tray { justify-self: end; display: flex; align-items: center; }
  .cloud { margin-left: 31px; }
  .lang { margin-left: 33px; width: 42px; }
  .status { margin-left: 31px; gap: 14px; }
  .clock { margin: 0 14px 0 26px; text-align: right; }
  .lang, .clock { display: block; line-height: 28px; }
</style>
